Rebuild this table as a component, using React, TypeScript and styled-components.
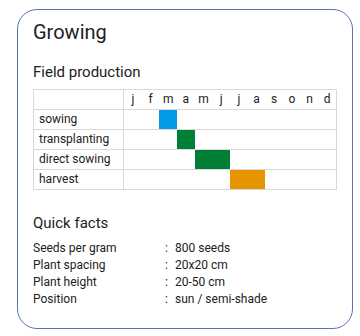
import React from 'react';
import styled, { createGlobalStyle } from 'styled-components';

const GlobalStyle = createGlobalStyle`
  html, body {
    margin: 0;
    padding: 0;
    background: #ffffff;
  }
  body {
    font-family: Roboto, "Liberation Sans", Arial, sans-serif;
    color: #212121;
  }
`;

const Page = styled.div`
  padding: 9px 0 0 17px;
`;

const Card = styled.section`
  box-sizing: border-box;
  width: 336px;
  height: 320px;
  border: 1px solid #5a72b5;
  border-radius: 20px;
  padding: 10px 15px 0 15px;
`;

const Title = styled.h1`
  margin: 0;
  font-size: 20px;
  line-height: 24px;
  font-weight: 400;
`;

const SectionTitle = styled.h2<{ $gap: number }>`
  margin: ${(p) => p.$gap}px 0 0 0;
  font-size: 15px;
  line-height: 18px;
  font-weight: 400;
`;

const Table = styled.div`
  margin-top: 8px;
  border: 1px solid #d9d9d9;
  width: 304px;
  box-sizing: border-box;
`;

const Row = styled.div`
  display: grid;
  grid-template-columns: 90px repeat(12, 1fr);
  height: 19px;
  & + & {
    border-top: 1px solid #d9d9d9;
  }
`;

const Label = styled.div`
  grid-column: 1;
  border-right: 1px solid #d9d9d9;
  padding-left: 5px;
  font-size: 12px;
  line-height: 19px;
  white-space: nowrap;
`;

const Month = styled.div`
  font-size: 12px;
  line-height: 19px;
  text-align: center;
`;

const Bar = styled.div<{ $color: string; $start: number; $span: number }>`
  grid-column: ${(p) => p.$start + 2} / span ${(p) => p.$span};
  grid-row: 1;
  background: ${(p) => p.$color};
`;

const Facts = styled.div`
  margin-top: 8px;
  display: grid;
  grid-template-columns: 132px 10px auto;
  font-size: 12px;
  line-height: 17px;
`;

const months = ['j', 'f', 'm', 'a', 'm', 'j', 'j', 'a', 's', 'o', 'n', 'd'];

const schedule = [
  { label: 'sowing', start: 2, span: 1, color: '#039be5' },
  { label: 'transplanting', start: 3, span: 1, color: '#007f37' },
  { label: 'direct sowing', start: 4, span: 2, color: '#007f37' },
  { label: 'harvest', start: 6, span: 2, color: '#e69500' },
];

const facts = [
  ['Seeds per gram', '800 seeds'],
  ['Plant spacing', '20x20 cm'],
  ['Plant height', '20-50 cm'],
  ['Position', 'sun / semi-shade'],
];

export default function App() {
  return (
    <Page>
      <GlobalStyle />
      <Card>
        <Title>Growing</Title>
        <SectionTitle $gap={19}>Field production</SectionTitle>
        <Table>
          <Row>
            <Label />
            {months.map((m, i) => (
              <Month key={i}>{m}</Month>
            ))}
          </Row>
          {schedule.map((s) => (
            <Row key={s.label}>
              <Label>{s.label}</Label>
              <Bar $color={s.color} $start={s.start} $span={s.span} />
            </Row>
          ))}
        </Table>
        <SectionTitle $gap={24}>Quick facts</SectionTitle>
        <Facts>
          {facts.map(([k, v]) => (
            <React.Fragment key={k}>
              <span>{k}</span>
              <span>:</span>
              <span>{v}</span>
            </React.Fragment>
          ))}
        </Facts>
      </Card>
    </Page>
  );
}
